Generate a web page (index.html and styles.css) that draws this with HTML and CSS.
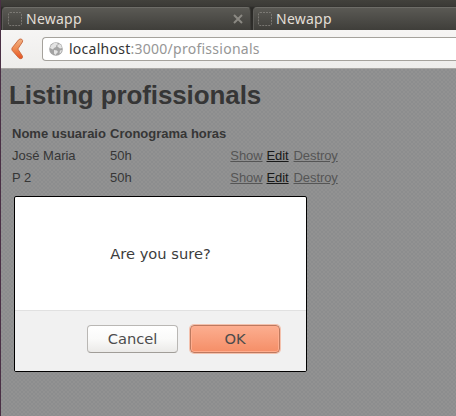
FILE: index.html
```html
<!DOCTYPE html>
<html lang="en">
<head>
<meta charset="utf-8">
<title>Newapp</title>
<link rel="stylesheet" href="styles.css">
</head>
<body>
<div class="browser">
  <header class="tabs">
    <div class="tab tab-first">
      <svg class="favicon" width="14" height="14" viewBox="0 0 14 14"><rect x=".5" y=".5" width="13" height="13" rx="1.5"/></svg>
      <span class="tab-title">Newapp</span>
      <svg class="close" width="10" height="10" viewBox="0 0 10 10"><path d="M1 1l8 8M9 1L1 9"/></svg>
    </div>
    <div class="tab tab-second">
      <svg class="favicon" width="14" height="14" viewBox="0 0 14 14"><rect x=".5" y=".5" width="13" height="13" rx="1.5"/></svg>
      <span class="tab-title">Newapp</span>
    </div>
  </header>
  <nav class="toolbar">
    <svg class="back" width="13" height="22" viewBox="0 0 13 22">
      <defs><linearGradient id="orange" x1="0" y1="0" x2="0" y2="1"><stop offset="0" stop-color="#f0b184"/><stop offset=".5" stop-color="#ef8a50"/><stop offset="1" stop-color="#e65222"/></linearGradient></defs>
      <path d="M7.6 1.8Q9 .4 10.8 1.3Q12.2 2.6 11.4 4L6.8 11L11.4 18Q12 19.5 10.8 20.5Q9 21.2 7.6 19.8L1.2 12.4Q.4 11 1.2 9.8Z" fill="url(#orange)" stroke="#c7653b" stroke-width=".9"/>
    </svg>
    <div class="address">
      <svg class="globe" width="14" height="14" viewBox="0 0 14 14">
        <circle cx="7" cy="7" r="6.8" fill="#a3a3a3"/>
        <path d="M5 1L8 .8L9 2.5L7.5 3L7 5L5 6L4 7.5L1 6L2 3.5ZM10 2l2 1 1 3-2 .5-2-1.5L8 4ZM5 8l3 .5 1 1.5-1.5 1.5L6.5 13 5 11.5ZM11 8.5l2-.5-1 2.5-1.5 1Z" fill="#e3e3e3"/>
      </svg>
      <span class="url"><span class="host">localhost</span>:3000/profissionals</span>
    </div>
  </nav>
  <main class="page">
    <h1>Listing profissionals</h1>
    <table>
      <thead><tr><th class="name">Nome usuaraio</th><th class="hours">Cronograma horas</th><th class="show"></th><th class="edit"></th><th></th></tr></thead>
      <tbody>
        <tr><td>José Maria</td><td>50h</td><td><a href="#">Show</a></td><td><a class="active" href="#">Edit</a></td><td><a href="#">Destroy</a></td></tr>
        <tr><td>P 2</td><td>50h</td><td><a href="#">Show</a></td><td><a class="active" href="#">Edit</a></td><td><a href="#">Destroy</a></td></tr>
      </tbody>
    </table>
  </main>
  <div class="dialog" role="dialog">
    <p class="message">Are you sure?</p>
    <footer class="actions">
      <button class="button cancel">Cancel</button>
      <button class="button ok">OK</button>
    </footer>
  </div>
</div>
</body>
</html>
```
FILE: styles.css
```css
* { box-sizing: border-box; }
body { margin: 0; overflow: hidden; }
.browser {
  position: relative;
  width: 456px;
  height: 416px;
  display: flex;
  flex-direction: column;
  border-left: 1px solid #4a3045;
}
.tabs {
  flex: none;
  height: 30px;
  padding: 7px 0 0 1px;
  display: flex;
  gap: 2px;
  background: linear-gradient(#42413c, #3b3a36 6px, #2a2926 8px, #2f2e2b);
}
.tab {
  height: 23px;
  display: flex;
  align-items: center;
  padding: 0 7px 0 6px;
  border: 1px solid #74736e;
  border-color: #6d6c67 #3a3936 transparent #5d5c58;
  border-bottom: 0;
  border-radius: 4px 4px 0 0;
  background: linear-gradient(#5a5954, #3f3e3a);
}
.tab-first { width: 249px; padding-left: 5px; }
.tab-second { flex: 1; padding-left: 4px; border-right: 0; border-radius: 4px 0 0 0; }
.favicon { flex: none; fill: none; stroke: #85837e; stroke-dasharray: 2 1; stroke-width: .8; }
.tab-title {
  flex: 1;
  margin-left: 4px;
  color: #e3dfd7;
  font: 14px/22px "Noto Sans", sans-serif;
  letter-spacing: .25px;
}
.close { fill: none; stroke: #8b8983; stroke-width: 2; }
.toolbar {
  flex: none;
  height: 39px;
  padding: 7px 0 7px 10px;
  display: flex;
  align-items: flex-start;
  background: linear-gradient(#f6f5f4, #eeedeb);
  border-bottom: 1px solid #a9a7a4;
}
.back { flex: none; margin-top: 1px; }
.address {
  flex: 1;
  height: 24px;
  margin-left: 18px;
  padding-left: 6px;
  display: flex;
  align-items: center;
  background: #fff;
  border: 1px solid #a5a29c;
  border-right: 0;
  border-radius: 4px 0 0 4px;
}
.globe { flex: none; }
.url {
  margin-left: 6px;
  color: #969696;
  font: 14px/22px "Noto Sans", sans-serif;
  letter-spacing: .26px;
}
.host { color: #333; }
.page {
  flex: 1;
  padding: 10px 8px;
  color: #363636;
  background: repeating-conic-gradient(#8c8d8e 0 25%, #929292 0 50%) 0 0 / 4px 4px;
  font: 13px/18px "Liberation Sans", Arial, sans-serif;
}
h1 { margin: 0 0 11px; font-size: 26px; line-height: 32px; font-weight: bold; letter-spacing: -.1px; }
table { border-spacing: 2px; }
th, td { padding: 1px; text-align: left; white-space: nowrap; }
td a { letter-spacing: -.08px; }
.name { width: 96px; }
.hours { width: 118px; }
.show { width: 34px; }
.edit { width: 25px; }
a { color: #555; }
a.active { color: #181818; }
.dialog {
  position: absolute;
  left: 13px;
  top: 196px;
  width: 293px;
  height: 176px;
  display: flex;
  flex-direction: column;
  background: #fff;
  border: 1px solid #000;
  border-radius: 2px;
  overflow: hidden;
  color: #3c3c3c;
  font: 14.67px/18px "DejaVu Sans", sans-serif;
}
.message { flex: 1; margin: 0; padding-top: 48px; text-align: center; }
.actions {
  height: 61px;
  padding: 14px 26px 0 0;
  display: flex;
  justify-content: flex-end;
  gap: 12px;
  background: #f1f1f1;
  border-top: 1px solid #e1e1e1;
}
.button {
  height: 28px;
  padding: 0;
  border-radius: 4px;
  color: #4c4c4c;
  font: inherit;
}
.cancel {
  width: 91px;
  border: 1px solid #b9b7b4;
  border-bottom-color: #a09d98;
  background: linear-gradient(#fff, #fafaf9 50%, #ebeae8);
}
.ok {
  width: 90px;
  border: 1px solid #bd795f;
  background: linear-gradient(#fcae90, #f58e67);
  box-shadow: 0 0 0 1px #f4c1ad, inset 0 0 0 1px #ffad8e;
}
```
